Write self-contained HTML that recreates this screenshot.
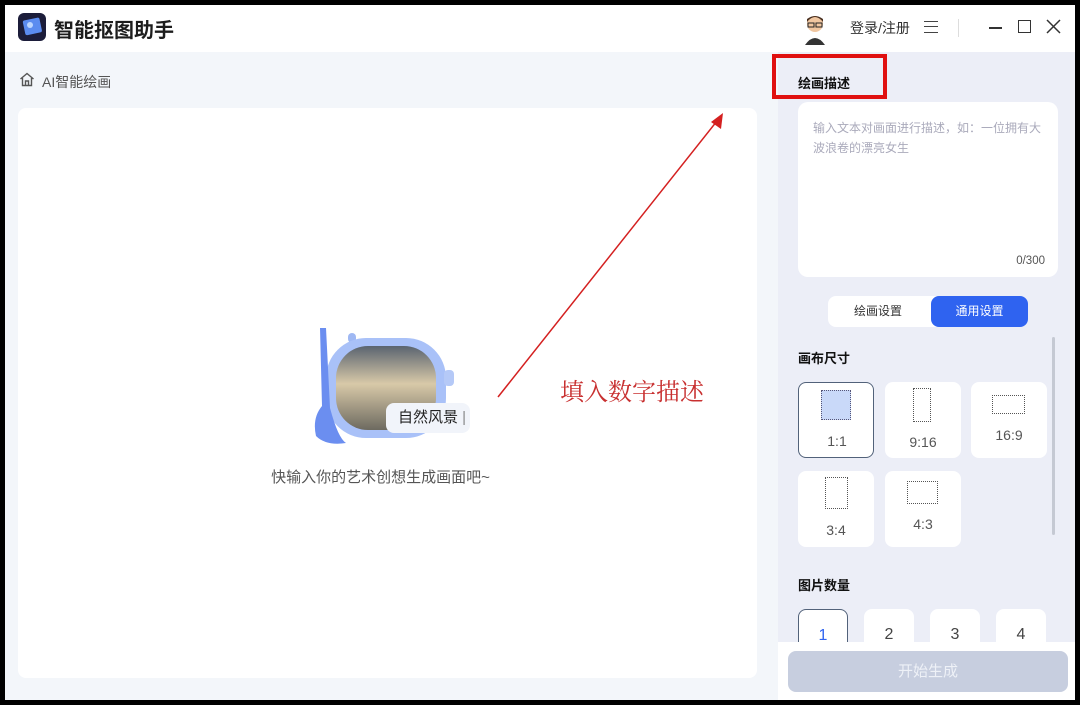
<!DOCTYPE html>
<html><head><meta charset="utf-8"><style>
*{margin:0;padding:0;box-sizing:border-box}
body{width:1080px;height:705px;background:#000;position:relative;overflow:hidden;font-family:"Liberation Sans","Noto Sans CJK SC",sans-serif}
.win{position:absolute;left:5px;top:5px;width:1070px;height:695px;background:#f3f6fa;overflow:hidden}
.abs{position:absolute}
.title{left:0;top:0;width:1070px;height:47px;background:#fff}
.card{background:#fff;border-radius:8px}
.rp{left:773px;top:47px;width:297px;height:648px;background:#eceef7}
.opt{position:absolute;background:#fff;border-radius:8px;width:76px;height:76px;text-align:center;font-size:14px;color:#555}
.opt.sel{border:1px solid #52627a}
.dot{position:absolute;border:1px dotted #555}
.num{position:absolute;background:#fff;border-radius:8px;width:50px;height:50px;text-align:center;font-size:16px;color:#444;line-height:52px}
</style></head><body>
<div class="win">
<div class="abs title">
  <svg class="abs" style="left:13px;top:8px" width="28" height="28" viewBox="0 0 28 28"><rect width="28" height="28" rx="6" fill="#1c1d3a"/><rect x="6" y="6" width="17" height="15" rx="2" fill="#5b8cf0" transform="rotate(-12 14 14)"/><circle cx="12" cy="12" r="3" fill="#bcd6ff"/></svg>
  <div class="abs" style="left:49px;top:9px;font-size:20px;font-weight:bold;color:#1d1d1d">智能抠图助手</div>
  <svg class="abs" style="left:798px;top:8px" width="24" height="32" viewBox="0 0 24 32"><circle cx="12" cy="11" r="8" fill="#f0c6a0"/><path d="M4 9 Q12 -1 20 9 L20 6 Q12 0 4 6Z" fill="#4a3020"/><rect x="5" y="10" width="6" height="4" fill="none" stroke="#222"/><rect x="13" y="10" width="6" height="4" fill="none" stroke="#222"/><path d="M2 32 Q12 18 22 32Z" fill="#333"/></svg>
  <div class="abs" style="left:845px;top:13px;font-size:14px;color:#333">登录/注册</div>
  <div class="abs" style="left:919px;top:16px;width:14px;height:12px;border-top:1.5px solid #444;border-bottom:1.5px solid #444"><div style="margin-top:4px;border-top:1.5px solid #444"></div></div>
  <div class="abs" style="left:953px;top:14px;width:1px;height:18px;background:#ddd"></div>
  <div class="abs" style="left:984px;top:22px;width:13px;height:1.5px;background:#333"></div>
  <div class="abs" style="left:1013px;top:15px;width:13px;height:13px;border:1.5px solid #333"></div>
  <svg class="abs" style="left:1041px;top:14px" width="15" height="15"><path d="M1 1L14 14M14 1L1 14" stroke="#333" stroke-width="1.5"/></svg>
</div>
<svg class="abs" style="left:14px;top:67px" width="16" height="15" viewBox="0 0 16 15"><path d="M1.5 7L8 1.5 14.5 7M3.5 6v7.5h9V6M6.5 13.5V9h3v4.5" fill="none" stroke="#555" stroke-width="1.4"/></svg>
<div class="abs" style="left:37px;top:67px;font-size:14px;color:#555">AI智能绘画</div>
<div class="abs card" style="left:13px;top:103px;width:739px;height:570px">
  <svg class="abs" style="left:290px;top:210px" width="155" height="130" viewBox="0 0 155 130">
    <defs><linearGradient id="g" x1="0" y1="0" x2="0" y2="1"><stop offset="0" stop-color="#5a6470"/><stop offset=".45" stop-color="#d8c9a8"/><stop offset="1" stop-color="#6d6a60"/></linearGradient></defs>
    <rect x="40" y="15" width="8" height="10" rx="4" fill="#9fb8f3"/>
    <rect x="18" y="20" width="120" height="100" rx="40" fill="#a9c1f8"/>
    <rect x="28" y="28" width="100" height="84" rx="32" fill="url(#g)"/>
    <rect x="136" y="52" width="10" height="16" rx="4" fill="#b5c9f7"/>
    <path d="M12 10 L18 10 L22 90 Q30 120 38 125 Q18 128 8 118 Q4 100 14 88Z" fill="#6b8ef0"/>
  </svg>
  <div class="abs" style="left:368px;top:295px;width:84px;height:30px;background:#f1f4fa;border-radius:8px;font-size:15px;color:#222;line-height:30px;padding-left:12px">自然风景 <span style="color:#888">|</span></div>
  <div class="abs" style="left:0;top:358px;width:739px;text-align:center;font-size:15px;color:#555;padding-right:14px">快输入你的艺术创想生成画面吧~</div>
</div>
<div class="abs rp">
  <div class="abs" style="left:20px;top:21px;font-size:13px;font-weight:bold;color:#111">绘画描述</div>
  <div class="abs card" style="left:20px;top:50px;width:260px;height:175px;border-radius:10px">
    <div class="abs" style="left:15px;top:16px;width:232px;font-size:12px;line-height:20px;color:#aab">输入文本对画面进行描述，如：一位拥有大波浪卷的漂亮女生</div>
    <div class="abs" style="right:13px;bottom:10px;font-size:11.5px;color:#555">0/300</div>
  </div>
  <div class="abs card" style="left:50px;top:244px;width:200px;height:31px;border-radius:8px">
    <div class="abs" style="left:0;top:0;width:100px;line-height:31px;text-align:center;font-size:12px;color:#333">绘画设置</div>
    <div class="abs" style="left:103px;top:0;width:97px;height:31px;background:#2f63f0;border-radius:8px;line-height:31px;text-align:center;font-size:12px;color:#fff">通用设置</div>
  </div>
  <div class="abs" style="top:285px;width:3px;height:198px;background:#c5c9d3;border-radius:2px;left:274px"></div>
  <div class="abs" style="left:20px;top:296px;font-size:13px;font-weight:bold;color:#111">画布尺寸</div>
  <div class="opt sel" style="left:20px;top:330px"><div class="abs" style="left:22px;top:7px;width:30px;height:30px;background:#c9d9f9;border:1px dotted #557"></div><div class="abs" style="left:0;top:50px;width:76px">1:1</div></div>
  <div class="opt" style="left:107px;top:330px"><div class="dot" style="left:28px;top:6px;width:18px;height:34px"></div><div class="abs" style="left:0;top:52px;width:76px">9:16</div></div>
  <div class="opt" style="left:193px;top:330px"><div class="dot" style="left:21px;top:13px;width:33px;height:19px"></div><div class="abs" style="left:0;top:45px;width:76px">16:9</div></div>
  <div class="opt" style="left:20px;top:419px"><div class="dot" style="left:27px;top:6px;width:23px;height:32px"></div><div class="abs" style="left:0;top:51px;width:76px">3:4</div></div>
  <div class="opt" style="left:107px;top:419px"><div class="dot" style="left:22px;top:10px;width:31px;height:23px"></div><div class="abs" style="left:0;top:45px;width:76px">4:3</div></div>
  <div class="abs" style="left:20px;top:523px;font-size:13px;font-weight:bold;color:#111">图片数量</div>
  <div class="num" style="left:20px;top:557px;border:1px solid #52627a;color:#2f63f0">1</div>
  <div class="num" style="left:86px;top:557px">2</div>
  <div class="num" style="left:152px;top:557px">3</div>
  <div class="num" style="left:218px;top:557px">4</div>
  <div class="abs" style="left:0;top:590px;width:297px;height:58px;background:#fff"></div>
  <div class="abs" style="left:10px;top:599px;width:280px;height:41px;background:#c7cedf;border-radius:8px;text-align:center;line-height:41px;font-size:15px;color:#eef1f7">开始生成</div>
</div>
<div class="abs" style="left:767px;top:49px;width:115px;height:45px;border:4px solid #e01010"></div>
<svg class="abs" style="left:480px;top:100px" width="250" height="300"><line x1="13" y1="292" x2="232" y2="16" stroke="#d42020" stroke-width="1.5"/><path d="M238 8 L236 24 L226 17Z" fill="#d42020"/></svg>
<div class="abs" style="left:555px;top:367px;font-size:24px;color:#c83030;font-family:'Noto Serif CJK SC',serif">填入数字描述</div>
</div>
</body></html>
